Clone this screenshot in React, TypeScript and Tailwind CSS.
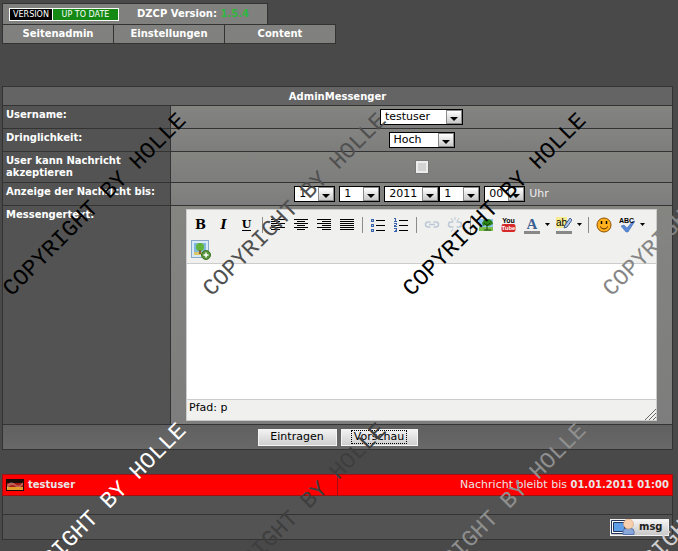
import React from "react";

const line = "border-[#333333]";

function Select({ id, label, options, width }: { id: string; label?: string; options: string[]; width: string }) {
  return (
    <span className={`relative inline-flex ${width}`}>
      <select
        id={id}
        aria-label={label}
        className="h-4 w-full appearance-none border border-black bg-white pl-1 text-[11px] leading-3 text-black outline-none"
      >
        {options.map((o) => (
          <option key={o}>{o}</option>
        ))}
      </select>
      <span className="pointer-events-none absolute inset-y-px right-px flex w-4 items-end justify-center border border-[#8a8a8a] bg-linear-to-b from-white to-[#c8c8c8] pb-px">
        <svg width="8" height="5" viewBox="0 0 8 5" aria-hidden="true">
          <path d="M0 0h8L4 4z" fill="#000" />
        </svg>
      </span>
    </span>
  );
}

function Row({ label, htmlFor, children, tall }: { label: string; htmlFor: string; children: React.ReactNode; tall?: boolean }) {
  return (
    <div className={`flex border-b ${line}`}>
      <div className={`w-[168px] shrink-0 border-r bg-[#535353] px-[3px] py-[3px] text-[10px] font-bold leading-3 ${line}`}>
        <label htmlFor={htmlFor}>{label}</label>
      </div>
      <div className={`flex min-w-0 grow items-center justify-center bg-linear-to-b from-[#848481] to-[#7d7d7d] ${tall ? "px-[15px] py-[3px]" : "py-[3px]"}`}>
        {children}
      </div>
    </div>
  );
}

function Tool({ title, children }: { title: string; children: React.ReactNode }) {
  return (
    <button type="button" title={title} aria-label={title} className="flex h-[25px] w-[23px] items-center justify-center">
      {children}
    </button>
  );
}

function Sep() {
  return (
    <span className="flex h-[25px] w-2 items-center justify-center">
      <span className="h-4 w-px bg-[#8c8c8c]" />
    </span>
  );
}

function More({ title }: { title: string }) {
  return (
    <button type="button" aria-label={title} className="flex h-[25px] w-[9px] items-center justify-center">
      <svg width="5" height="3" viewBox="0 0 5 3">
        <path d="M0 0h5L2.500 3z" fill="#000" />
      </svg>
    </button>
  );
}

function Lines({ rows }: { rows: [number, number][] }) {
  return (
    <svg width="14" height="13" viewBox="0 0 14 13" shapeRendering="crispEdges">
      {rows.map(([x, w], i) => (
        <rect key={i} x={x} y={i * 2 + 1} width={w} height="1" fill="#000" />
      ))}
    </svg>
  );
}

function ListIcon({ numbered }: { numbered?: boolean }) {
  return (
    <svg width="14" height="14" viewBox="0 0 14 14" shapeRendering="crispEdges">
      {[2, 7, 12].map((y) => (
        <rect key={y} x="5" y={y} width="9" height="1" fill="#000" />
      ))}
      {numbered ? (
        <path
          fill="none"
          stroke="#3a62ad"
          d="M0 .5h2M1.500 0v4M0 3.500h3M0 5.500h3M2.500 5v2M0 7.500h2M.5 7v2M0 8.500h3M0 10.500h3M2.500 10v4M1 12.500h2M0 13.500h3"
        />
      ) : (
        [2, 7, 12].map((y) => <rect key={y} x="0.500" y={y - 1} width="2" height="2" fill="#b9cdec" stroke="#3a62ad" />)
      )}
    </svg>
  );
}

function Chain({ broken }: { broken?: boolean }) {
  return (
    <svg width="16" height="16" viewBox="0 0 16 16" fill="none" stroke="#bcc8d6" strokeWidth="1.500">
      <path d="M6.500 10H4a2 2 0 0 1 0-5h2.500M9.500 5H12a2 2 0 0 1 0 5H9.500" />
      {broken ? <path d="M4 1l2 3M8 0v3M12 1l-2 3M4 15l2-3M8 16v-3M12 15l-2-3" strokeWidth="1" /> : <path d="M5 7.500h6" />}
    </svg>
  );
}

function Editor() {
  return (
    <div className="w-full border border-[#cccccc] bg-[#f0f0ee] text-black">
      <div className="flex flex-wrap border-b border-[#cccccc] px-[2px] pt-[2px] pb-px" role="toolbar" aria-label="Formatierung">
        <Tool title="Fett"><span className="font-[DejaVu_Serif,serif] text-[13px] font-bold leading-4">B</span></Tool>
        <Tool title="Kursiv"><span className="font-[DejaVu_Serif,serif] text-[13px] font-bold italic leading-4">I</span></Tool>
        <Tool title="Unterstrichen"><span className="border-b border-black font-[DejaVu_Serif,serif] text-[11px] font-bold leading-[11px]">U</span></Tool>
        <Sep />
        <Tool title="Linksbündig"><Lines rows={[[0, 14], [0, 9], [0, 14], [0, 9], [0, 14], [0, 9]]} /></Tool>
        <Tool title="Zentriert"><Lines rows={[[0, 14], [3, 8], [0, 14], [3, 8], [0, 14], [3, 8]]} /></Tool>
        <Tool title="Rechtsbündig"><Lines rows={[[0, 14], [5, 9], [0, 14], [5, 9], [0, 14], [5, 9]]} /></Tool>
        <Tool title="Blocksatz"><Lines rows={[[0, 14], [0, 14], [0, 14], [0, 14], [0, 14], [0, 14]]} /></Tool>
        <Sep />
        <Tool title="Aufzählung"><ListIcon /></Tool>
        <Tool title="Nummerierung"><ListIcon numbered /></Tool>
        <Sep />
        <Tool title="Link einfügen"><Chain /></Tool>
        <Tool title="Link entfernen"><Chain broken /></Tool>
        <Sep />
        <Tool title="Bild einfügen">
          <svg width="14" height="14" viewBox="0 0 14 14">
            <path fill="#8fc4ee" d="M0 1h14v12H0z" />
            <path fill="#7cc04a" d="M0 9h14v4H0z" />
            <path fill="#2c8414" d="M3 5l2-3 5-1 3 2 1 3-4 2-3-1-3 1z" />
            <path stroke="#174c0c" fill="none" d="M8 12V6M8 8l3-3M8 8L5 5M5 12h7" />
          </svg>
        </Tool>
        <Tool title="YouTube">
          <svg width="15" height="17" viewBox="0 0 15 17">
            <text x="7.500" y="7" textAnchor="middle" fontFamily="Liberation Sans, sans-serif" fontWeight="bold" fontSize="7">You</text>
            <rect x="0.500" y="8" width="14" height="8" rx="2" fill="#d62a2a" />
            <text x="7.500" y="14" textAnchor="middle" fontFamily="Liberation Sans, sans-serif" fontWeight="bold" fontSize="6" fill="#fff">Tube</text>
          </svg>
        </Tool>
        <Tool title="Textfarbe">
          <svg width="16" height="18" viewBox="0 0 16 18">
            <text x="8" y="13" textAnchor="middle" fontFamily="Liberation Serif, serif" fontWeight="bold" fontSize="15" fill="#3c5f92">A</text>
            <rect y="15" width="16" height="3" fill="#888" />
          </svg>
        </Tool>
        <More title="Textfarbe wählen" />
        <Tool title="Hintergrundfarbe">
          <svg width="16" height="18" viewBox="0 0 16 18">
            <rect y="1" width="11" height="11" fill="#f7eb91" />
            <text x="0" y="10" fontFamily="Liberation Sans, sans-serif" fontSize="10">ab</text>
            <path d="M14 2l2 2-5 7-3 1 1-3z" fill="#a9c3ea" stroke="#44618f" />
            <rect y="15" width="16" height="3" fill="#888" />
          </svg>
        </Tool>
        <More title="Hintergrundfarbe wählen" />
        <Sep />
        <Tool title="Smilies">
          <svg width="16" height="16" viewBox="0 0 16 16">
            <circle cx="8" cy="8" r="7" fill="#ffb21e" stroke="#8c4d00" />
            <path d="M5.500 4v3M10.500 4v3" stroke="#000" strokeWidth="1.500" />
            <path d="M4 9.500q4 5 8 0" fill="none" stroke="#5c2b00" />
          </svg>
        </Tool>
        <Tool title="Rechtschreibprüfung">
          <svg width="16" height="16" viewBox="0 0 16 16">
            <path d="M2 9l3-1 3 3 5-6 3-1-7 11H7z" fill="#5b8bd8" stroke="#315fa8" strokeWidth="0.500" />
            <text x="0" y="6" fontFamily="Liberation Sans, sans-serif" fontWeight="bold" fontSize="7">ABC</text>
          </svg>
        </Tool>
        <More title="Sprache wählen" />
        <Tool title="Bild hochladen">
          <svg width="20" height="20" viewBox="0 0 20 20">
            <rect x="0.500" y="0.500" width="17" height="17" fill="#d9e9f5" stroke="#86a9c8" />
            <rect x="3" y="3" width="12" height="12" fill="#80b9df" />
            <path d="M3 12h12v3H3z" fill="#d9c767" />
            <circle cx="9" cy="7" r="4" fill="#64b437" />
            <path d="M8 10h2v4H8z" fill="#806034" />
            <circle cx="15" cy="15" r="4.500" fill="#58943a" stroke="#3e7426" />
            <path d="M15 12.500v5M12.500 15h5" stroke="#fff" strokeWidth="1.500" />
          </svg>
        </Tool>
      </div>
      <textarea id="text" className="block h-[135px] w-full resize-none bg-white p-2 text-[11px] outline-none" />
      <div className="flex h-[21px] justify-between border-t border-[#cccccc] pl-[2px]">
        <span className="text-[11px] leading-4">Pfad: p</span>
        <svg width="12" height="12" viewBox="0 0 12 12" className="self-end" aria-hidden="true">
          <path d="M1 12L12 1M5 12l7-7M9 12l3-3" stroke="#666" fill="none" />
        </svg>
      </div>
    </div>
  );
}

const marks = [
  "left-[95px] top-[205px] text-black",
  "left-[295px] top-[205px] text-[#505050]",
  "left-[495px] top-[205px] text-black",
  "left-[695px] top-[205px] text-[#858585]",
  "left-[95px] top-[515px] text-white",
  "left-[295px] top-[515px] text-[#3e3e3e]",
  "left-[495px] top-[515px] text-[#8f8f8f]",
  "left-[695px] top-[515px] text-[#d0d0d0]",
];

function Watermark() {
  return (
    <div className="pointer-events-none absolute inset-0 overflow-hidden" aria-hidden="true">
      {marks.map((m) => (
        <span
          key={m}
          className={`absolute -translate-x-1/2 -translate-y-1/2 -rotate-45 whitespace-nowrap font-[Liberation_Mono,monospace] text-[23px] leading-6 ${m}`}
        >
          COPYRIGHT BY HOLLE
        </span>
      ))}
    </div>
  );
}

const push = "h-[17px] border border-[#f4f4f4] bg-linear-to-b from-[#f2f2f2] to-[#cfcfcf] text-[11px] leading-3 text-black";

export default function App() {
  return (
    <div className="relative min-h-screen overflow-hidden bg-[#494949] pt-[3px] pr-[5px] pl-[2px] font-[Verdana,DejaVu_Sans,sans-serif] text-[11px] leading-4 text-white">
      <header>
        <div className={`flex h-[22px] w-[266px] items-center border bg-[#80807e] pl-[6px] ${line}`}>
          <span className="flex h-[13px] w-[110px] border border-white text-[8px] leading-[11px]">
            <span className="w-[43px] border-r border-white bg-black text-center">VERSION</span>
            <span className="grow bg-[#148a14] text-center">UP TO DATE</span>
          </span>
          <span className="ml-[18px] whitespace-nowrap text-[10px] font-bold">
            DZCP Version: <span className="text-[#2fb83f]">1.5.4</span>
          </span>
        </div>
        <nav className={`-mt-px flex h-5 w-[334px] divide-x divide-[#333333] border bg-[#80807e] text-[10px] font-bold ${line}`}>
          {["Seitenadmin", "Einstellungen", "Content"].map((t) => (
            <a key={t} href="#" className="flex flex-1 items-center justify-center">
              {t}
            </a>
          ))}
        </nav>
      </header>

      <form className={`mt-[42px] border ${line}`} onSubmit={(e) => e.preventDefault()}>
        <h1 className={`border-b bg-[#646464] pt-px text-center text-[10px] font-bold leading-[17px] ${line}`}>AdminMessenger</h1>
        <Row label="Username:" htmlFor="user">
          <Select id="user" options={["testuser"]} width="w-[83px]" />
        </Row>
        <Row label="Dringlichkeit:" htmlFor="prio">
          <Select id="prio" options={["Hoch", "Mittel", "Niedrig"]} width="w-[66px]" />
        </Row>
        <Row label="User kann Nachricht akzeptieren" htmlFor="accept">
          <input
            id="accept"
            type="checkbox"
            className="size-3 appearance-none border-2 border-[#ececec] bg-[#d2d2d2] outline outline-[#777777] checked:bg-black"
          />
        </Row>
        <Row label="Anzeige der Nachricht bis:" htmlFor="day">
          <div className="flex items-center">
            <Select id="day" options={["1"]} width="w-[41px] mr-1" />
            <Select id="month" label="Monat" options={["1"]} width="w-[41px] mr-1" />
            <Select id="year" label="Jahr" options={["2011"]} width="w-[55px]" />
            <Select id="hour" label="Stunde" options={["1"]} width="w-[41px] mr-1" />
            <Select id="minute" label="Minute" options={["00"]} width="w-[41px] mr-1" />
            <span className="text-[#eeeeee]">Uhr</span>
          </div>
        </Row>
        <Row label="Messengertext:" htmlFor="text" tall>
          <Editor />
        </Row>
        <div className="flex h-6 items-center justify-center gap-1 bg-linear-to-b from-[#606060] to-[#686868]">
          <button type="submit" className={`w-[79px] ${push}`}>Eintragen</button>
          <button type="button" className={`flex w-[77px] items-center justify-center ${push}`}>
            <span className="border border-dotted border-black px-[2px]">Vorschau</span>
          </button>
        </div>
      </form>

      <section className={`mt-6 border bg-[#535353] ${line}`}>
        <div className="-mx-px -mt-px flex h-[22px] divide-x divide-[#a01010] border border-[#a01010] bg-[#ff0000] text-[#e6e6e6]">
          <div className="flex flex-1 items-center gap-1 pl-[3px] text-[10px] font-bold">
            <svg width="18" height="12" viewBox="0 0 18 12" role="img" aria-label="Deutschland">
              <path fill="#1b0b08" d="M0 0h18v12H0z" />
              <path fill="#a61c12" d="M1 4h16v4H1z" />
              <path fill="#e39a2c" d="M1 8h16v3H1z" />
              <path fill="#fff" fillOpacity="0.300" d="M1 6q4-5 8-1t8-2v3q-4 4-8 1t-8 3z" />
            </svg>
            testuser
          </div>
          <div className="flex flex-1 items-center justify-end pr-[3px]">
            <span className="whitespace-nowrap">Nachricht bleibt bis <b className="text-[10px]">01.01.2011 01:00</b></span>
          </div>
        </div>
        <div className={`h-[19px] border-b ${line}`} />
        <div className="flex h-6 items-center justify-end pr-[3px]">
          <button type="button" className="flex h-[17px] w-[59px] items-center gap-1 border border-[#f2f2f2] bg-linear-to-b from-[#f4f4f4] to-[#c8c8c8] text-[10px] font-bold text-[#222222]">
            <svg width="24" height="16" viewBox="0 0 24 16" aria-hidden="true">
              <path fill="#fff" stroke="#20345c" d="M.5 1.500h14v13H.5z" />
              <path fill="#5e9ee6" stroke="#20345c" d="M2.500 3.500h11v9h-11z" />
              <path fill="#88a6d8" stroke="#5872ac" d="M12 15.500v-3q0-3 3-3h5q3 0 3 3v3z" />
              <circle cx="17.500" cy="5" r="5" fill="#f6cfae" stroke="#c9946b" strokeWidth="0.500" />
            </svg>
            <span>msg</span>
          </button>
        </div>
      </section>
      <Watermark />
    </div>
  );
}
